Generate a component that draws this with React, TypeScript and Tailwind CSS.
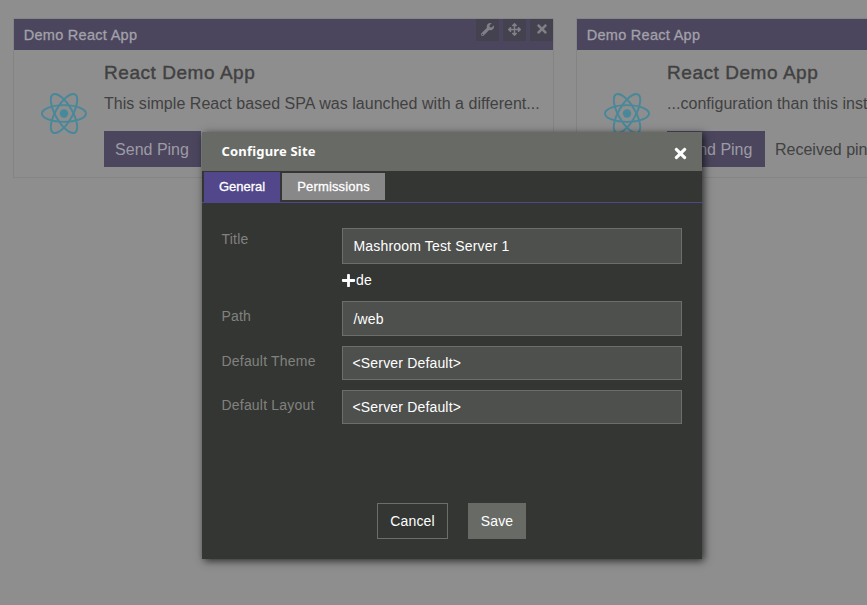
import React from 'react';
import { FaArrowsAlt, FaPlus, FaTimes, FaWrench } from 'react-icons/fa';

function ReactLogo() {
  return (
    <svg width="46" height="43" viewBox="-23 -21.5 46 43" fill="none" stroke="#47889a" strokeWidth="1.9">
      <circle r="4.2" fill="#47889a" stroke="none" />
      <ellipse rx="22" ry="8.4" />
      <ellipse rx="22" ry="8.4" transform="rotate(60)" />
      <ellipse rx="22" ry="8.4" transform="rotate(120)" />
    </svg>
  );
}

function Portlet({ text, message, actions }: { text: string; message?: string; actions?: boolean }) {
  return (
    <section className="h-[160px] w-[541px] shrink-0 border border-[#848487] text-[#414141]">
      <header className="flex h-[31px] items-start justify-between bg-[#4b465e] pl-[9.75px]">
        <h2 className="text-[14.5px] leading-[32px] tracking-[0.28px] text-[#a3a1a9] [-webkit-text-stroke:0.3px]">Demo React App</h2>
        {actions && (
          <div className="flex gap-1 text-[#818088]">
            <button className="flex h-[22px] w-[23px] items-center justify-center bg-[#45424f] pb-[2px]"><FaWrench size={13} /></button>
            <button className="flex h-[22px] w-[23px] items-center justify-center bg-[#45424f] pb-[2px]"><FaArrowsAlt size={13} /></button>
            <button className="flex h-[22px] w-[23px] items-center justify-center bg-[#45424f] pb-[2px]"><FaTimes size={14} /></button>
          </div>
        )}
      </header>
      <div className="flex">
        <div className="w-[90px] pt-[42px] pl-[27px]"><ReactLogo /></div>
        <div className="min-w-0 whitespace-nowrap">
          <h3 className="pt-[9px] text-[19px] leading-[28px] tracking-[0.55px] [-webkit-text-stroke:0.4px]">React Demo App</h3>
          <p className="pt-[5px] text-[16px] leading-[24px] tracking-[0.04px]">{text}</p>
          <div className="mt-[15px] flex items-center gap-[10px]">
            <button className={`h-[36px] ${message ? 'w-[98px]' : 'w-[97px]'} bg-[#4b465e] pt-[2px] pr-[1px] text-[16px] text-[#9d9ba4]`}>Send Ping</button>
            {message && <span className="pt-[2px] text-[16px]">{message}</span>}
          </div>
        </div>
      </div>
    </section>
  );
}

function Field({ label, value, className, labelClass, inputClass }: { label: string; value: string; className: string; labelClass: string; inputClass: string }) {
  return (
    <div className={`flex ${className}`}>
      <label className={`w-[120.5px] text-[14px] leading-[22px] tracking-[0.2px] text-[#81827f] ${labelClass}`}>{label}</label>
      <div className={`flex w-[340px] items-center border border-[#6b6e69] bg-[#4e504d] text-[14px] tracking-[0.17px] text-white ${inputClass}`}>{value}</div>
    </div>
  );
}

function ConfigureDialog() {
  return (
    <div role="dialog" className="absolute top-[132px] left-[202px] h-[427px] w-[500px] bg-[#343633] shadow-[2px_2px_8px_0px_rgba(0,0,0,0.7)]">
      <header className="flex h-[39px] items-center justify-between bg-[#686b65] pr-[13px] pl-[19.5px] text-white">
        <h1 className="font-['Noto_Sans'] text-[13px] font-bold tracking-[0.18px]">Configure Site</h1>
        <FaTimes size={17} className="mt-[3px]" />
      </header>
      <nav className="flex h-[32px] items-start gap-[2px] border-b border-[#51478a] pt-px pl-[2px] text-[13px] text-white">
        <button className="h-[30px] w-[76px] bg-[#51478a] [-webkit-text-stroke:0.3px]">General</button>
        <button className="mt-px h-[27px] w-[103px] bg-[#888888] tracking-[0.17px] [-webkit-text-stroke:0.3px]">Permissions</button>
      </nav>
      <div className="pt-[25px] pl-[19.5px]">
        <Field label="Title" value="Mashroom Test Server 1" className="h-[36px]" labelClass="" inputClass="pl-[10.5px]" />
        <div className="ml-[119px] flex h-[37px] items-center gap-0 pb-[4px] text-[14px] text-white">
          <FaPlus size={15} className="mb-px" />
          <span className="ml-[0.5px] tracking-[0.3px]">de</span>
        </div>
        <Field label="Path" value="/web" className="h-[35px]" labelClass="pt-[4px]" inputClass="pl-[10.5px] pt-px" />
        <Field label="Default Theme" value="<Server Default>" className="mt-[10px] h-[34px]" labelClass="pt-[4px]" inputClass="pl-[9.5px]" />
        <Field label="Default Layout" value="<Server Default>" className="mt-[10px] h-[34px]" labelClass="pt-[4px]" inputClass="pl-[9.5px]" />
      </div>
      <footer className="mt-[79px] flex gap-5 pl-[175px] text-[14px] tracking-[0.17px] text-white">
        <button className="h-[36px] w-[71px] border border-[#6b6e69]">Cancel</button>
        <button className="h-[36px] w-[58px] bg-[#686b65]">Save</button>
      </footer>
    </div>
  );
}

export default function App() {
  return (
    <main className="relative h-[605px] w-[867px] overflow-hidden bg-[#8e8e8e] font-['Liberation_Sans',Arial,sans-serif]">
      <div className="flex gap-[22px] pt-[18px] pl-[13px]">
        <Portlet text="This simple React based SPA was launched with a different..." actions />
        <Portlet text="...configuration than this instance" message="Received pings: 0" />
      </div>
      <ConfigureDialog />
    </main>
  );
}
